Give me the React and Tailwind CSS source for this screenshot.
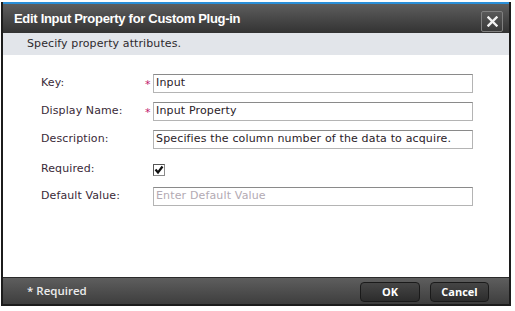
import React from "react";

const Field = ({ label, required, children, className }) => (
  <div className={"flex items-center h-[19px] " + className}>
    <div className="w-[104px] text-[11px] tracking-[0.1px] text-[#3a2a38]">{label}</div>
    <div className="w-[8px] text-[11px] text-[#c0186a] leading-none pt-[2px]">
      {required ? "*" : ""}
    </div>
    {children}
  </div>
);

const TextBox = ({ value, placeholder }) => (
  <div className="w-[320px] h-[19px] border border-[#b4b4b4] border-t-[#8a8a8a] bg-white flex items-center px-[2px] text-[11px] tracking-[0.15px]">
    {value ? (
      <span className="text-[#2a2228]">{value}</span>
    ) : (
      <span className="text-[#b3aab3]">{placeholder}</span>
    )}
  </div>
);

const App = () => {
  return (
    <div
      className="w-[515px] h-[311px] bg-white"
      style={{ fontFamily: '"DejaVu Sans", Verdana, sans-serif' }}
    >
      <div className="ml-[1px] pt-[2px] w-[510px] h-[306px]">
        <div className="h-[304px] flex flex-col border-x-2 border-b-2 border-[#1c1c1c]">
          {/* title bar */}
          <div className="h-[31px] border-t-2 border-[#2a8fd8] bg-gradient-to-b from-[#5e5e5e] to-[#333333] flex items-center justify-between pl-[11px] pr-[6px]">
            <span
              className="text-white font-bold text-[13px] tracking-[-0.3px]"
              style={{ fontFamily: '"Liberation Sans", Arial, sans-serif' }}
            >
              Edit Input Property for Custom Plug-in
            </span>
            <div className="w-[22px] h-[21px] mt-[6px] rounded-[2px] border border-[#808080] bg-gradient-to-b from-[#595959] to-[#3a3a3a] flex items-center justify-center">
              <svg width="11" height="11" viewBox="0 0 11 11">
                <path d="M1.5 1.5 L9.5 9.5 M9.5 1.5 L1.5 9.5" stroke="#f2f2f2" strokeWidth="2.4" strokeLinecap="square" />
              </svg>
            </div>
          </div>

          {/* subtitle */}
          <div className="h-[22px] bg-[#e2e5ea] flex items-center pl-[24px] text-[11px] tracking-[0.1px] text-[#2e2a2e]">
            Specify property attributes.
          </div>

          {/* body */}
          <div className="flex-1 bg-white pl-[38px]">
            <Field label="Key:" required className="mt-[19px]">
              <TextBox value="Input" />
            </Field>
            <Field label="Display Name:" required className="mt-[9px]">
              <TextBox value="Input Property" />
            </Field>
            <Field label="Description:" className="mt-[9px]">
              <TextBox value="Specifies the column number of the data to acquire." />
            </Field>
            <Field label="Required:" className="mt-[11px]">
              <div className="w-[12px] h-[12px] border border-[#8a8a8a] border-l-[#555] border-t-[#555] bg-white flex items-center justify-center">
                <svg width="10" height="10" viewBox="0 0 10 10">
                  <path d="M1.5 4.5 L4 7.5 L8.5 1.5" stroke="#111" strokeWidth="2.2" fill="none" />
                </svg>
              </div>
            </Field>
            <Field label="Default Value:" className="mt-[8px]">
              <TextBox placeholder="Enter Default Value" />
            </Field>
          </div>

          {/* footer */}
          <div
            className="h-[27px] border-t border-[#2a2a2a] bg-gradient-to-b from-[#5e5e5e] to-[#3e3e3e] flex items-center justify-between pl-[24px] pr-[20px]"
            style={{ fontFamily: '"Open Sans", Tahoma, sans-serif' }}
          >
            <span className="text-[#ececec] text-[11.5px] font-semibold">* Required</span>
            <div className="flex gap-[10px] mt-[2px]">
              <button className="w-[60px] h-[20px] rounded-[4px] border border-[#1a1a1a] bg-gradient-to-b from-[#464646] to-[#2c2c2c] text-white text-[11px] font-bold">
                OK
              </button>
              <button className="w-[59px] h-[20px] rounded-[4px] border border-[#1a1a1a] bg-gradient-to-b from-[#464646] to-[#2c2c2c] text-white text-[11px] font-bold">
                Cancel
              </button>
            </div>
          </div>
        </div>
      </div>
    </div>
  );
};

export default App;
